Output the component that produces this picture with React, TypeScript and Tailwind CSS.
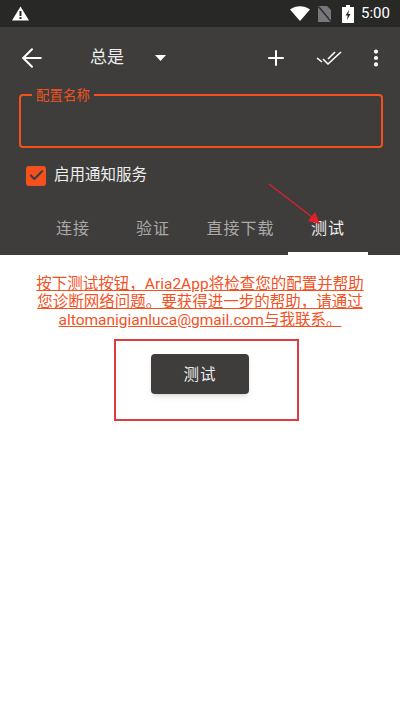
import React from 'react';
import { ArrowLeft, Plus, MoreVertical, Check } from 'lucide-react';

const cjk = "font-['Roboto','Noto_Sans_CJK_SC',sans-serif]";

function StatusBar() {
  return (
    <div className="h-[27px] bg-[#282827] flex items-center justify-between pl-[12px] pr-[9px] shrink-0">
      <svg width="17" height="15" viewBox="0 0 17 15">
        <path d="M8.5 0.5 L17 14.5 H0 Z" fill="#fff" />
        <rect x="7.5" y="5" width="2" height="5" fill="#282827" />
        <rect x="7.5" y="11" width="2" height="2" fill="#282827" />
      </svg>
      <div className="flex items-center">
        <svg width="20" height="15" viewBox="0 0 20 15" className="mr-[8px]">
          <path d="M0 3.5 C5.5 -1 14.5 -1 20 3.5 L10 15 Z" fill="#fff" />
        </svg>
        <svg width="13" height="16" viewBox="0 0 13 16" className="mr-[11px]">
          <path d="M0 0 H9 L13 4 V16 H0 Z" fill="#77767a" />
          <path d="M0.5 0.5 L13 15.5" stroke="#282827" strokeWidth="1.3" />
        </svg>
        <svg width="12" height="18" viewBox="0 0 12 18" className="mr-[7px]">
          <path d="M4 0 H8 V2 H12 V18 H0 V2 H4 Z" fill="#fff" />
          <path d="M7 5 L3.5 10.5 H5.7 L5 15 L8.5 9 H6.3 Z" fill="#282827" />
        </svg>
        <span className="font-['Roboto',sans-serif] text-[15px] leading-none text-white w-[30px]">5:00</span>
      </div>
    </div>
  );
}

function Toolbar() {
  return (
    <div className="h-[62px] flex items-center relative shrink-0 text-white">
      <ArrowLeft className="w-[30px] h-[30px] ml-[17px]" strokeWidth={1.6} />
      <span className={`${cjk} text-[17px] ml-[43px] text-[#eeeeee]`}>总是</span>
      <svg width="11" height="6" viewBox="0 0 11 6" className="ml-[31px]">
        <path d="M0 0 H11 L5.5 6 Z" fill="#fff" />
      </svg>
      <div className="ml-auto flex items-center">
        <Plus className="w-[24px] h-[24px] mr-[28px]" strokeWidth={2} />
        <svg width="26" height="16" viewBox="0 0 26 16" fill="none" stroke="#fff" strokeWidth="1.6" className="mr-[23px]">
          <path d="M1 8 L6 12" />
          <path d="M7 9 L12 14 L25 2" />
          <path d="M12 9 L19 2" />
        </svg>
        <MoreVertical className="w-[22px] h-[22px] mr-[13px]" strokeWidth={2.6} />
      </div>
    </div>
  );
}

function Tabs() {
  return (
    <div className={`${cjk} flex h-[50px] pl-[33px] text-[16px] tracking-[1px] mt-auto`}>
      <div className="w-[80px] pb-[2px] flex items-center justify-center text-[#a9a9a8]">连接</div>
      <div className="w-[80px] pb-[2px] flex items-center justify-center text-[#a9a9a8]">验证</div>
      <div className="w-[95px] pb-[2px] flex items-center justify-center text-[#a9a9a8]">直接下载</div>
      <div className="w-[80px] flex items-center justify-center text-[#eeeeee] border-b-[3px] border-white">测试</div>
    </div>
  );
}

export default function App() {
  return (
    <div className="w-[400px] h-[711px] bg-white flex flex-col relative overflow-hidden">
      <div className="h-[255px] bg-[#3e3d3c] flex flex-col shrink-0">
        <StatusBar />
        <Toolbar />
        <fieldset className="ml-[19px] w-[364px] h-[60px] -mt-[1px] border-2 border-[#f4511e] rounded-[4px] px-[11px]">
          <legend className={`${cjk} px-[4px] text-[13.5px] leading-[14px] text-[#f4511e]`}>配置名称</legend>
        </fieldset>
        <div className="flex items-center ml-[26px] mt-[16px]">
          <div className="w-[20px] h-[20px] bg-[#f4511e] rounded-[3px] flex items-center justify-center">
            <Check className="w-[17px] h-[17px] text-[#3e3d3c]" strokeWidth={3} />
          </div>
          <span className={`${cjk} ml-[8px] text-[15.5px] text-[#eeeeee]`}>启用通知服务</span>
        </div>
        <Tabs />
      </div>

      <div className={`${cjk} mt-[20px] text-center text-[15.5px] leading-[18px] text-[#f4511e] underline`}>
        <p>按下测试按钮，Aria2App将检查您的配置并帮助</p>
        <p>您诊断网络问题。要获得进一步的帮助，请通过</p>
        <p>altomanigianluca@gmail.com与我联系。</p>
      </div>

      <button className={`${cjk} self-center mt-[25px] w-[98px] h-[40px] pt-[3px] bg-[#3e3d3c] rounded-[4px] shadow-md text-[15.5px] tracking-[1px] text-[#eeeeee]`}>
        测试
      </button>

      {/* red annotations on top of the screenshot */}
      <div className="absolute left-[114px] top-[339px] w-[185px] h-[82px] border-2 border-[#e23b3f]" />
      <svg className="absolute left-[265px] top-[180px]" width="62" height="50" viewBox="0 0 62 50">
        <path d="M4 4 L47 37" stroke="#e0202a" strokeWidth="1.3" />
        <path d="M55 44 L43 41 L50 32 Z" fill="#e0202a" />
      </svg>
    </div>
  );
}
